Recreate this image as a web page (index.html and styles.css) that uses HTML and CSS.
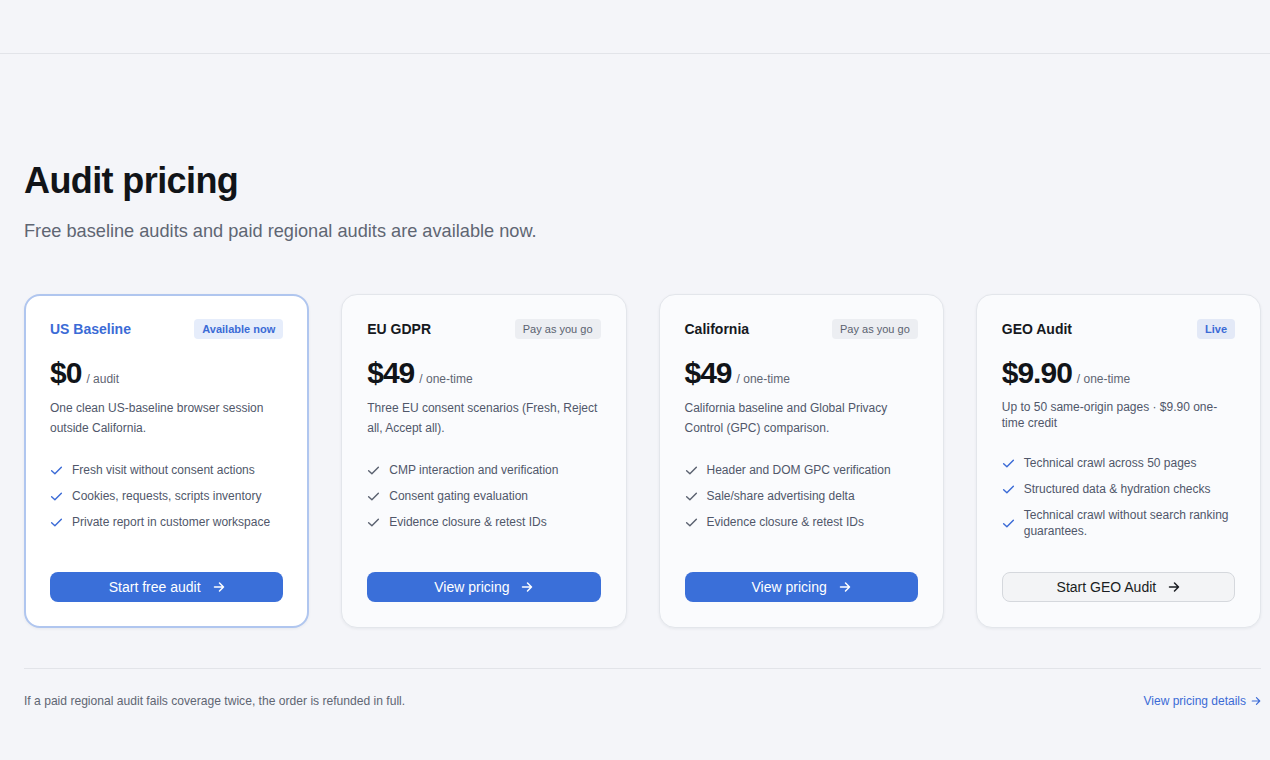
FILE: index.html
```html
<!DOCTYPE html>
<html lang="en">
<head>
<meta charset="utf-8">
<title>Audit pricing</title>
<link rel="stylesheet" href="styles.css">
</head>
<body>
<header class="topbar"></header>
<main class="main">
  <h1 class="title">Audit pricing</h1>
  <p class="subtitle">Free baseline audits and paid regional audits are available now.</p>

  <section class="plans">
    <article class="card card-featured">
      <div class="card-head">
        <h2 class="card-name card-name-blue">US Baseline</h2>
        <span class="badge badge-blue">Available now</span>
      </div>
      <div class="price"><span class="amount">$0</span><span class="unit">/ audit</span></div>
      <p class="desc">One clean US-baseline browser session outside California.</p>
      <ul class="features features-blue">
        <li><svg class="check" viewBox="0 0 12 12"><path d="M1.5 6.3l3 2.8 6-6.2"/></svg>Fresh visit without consent actions</li>
        <li><svg class="check" viewBox="0 0 12 12"><path d="M1.5 6.3l3 2.8 6-6.2"/></svg>Cookies, requests, scripts inventory</li>
        <li><svg class="check" viewBox="0 0 12 12"><path d="M1.5 6.3l3 2.8 6-6.2"/></svg>Private report in customer workspace</li>
      </ul>
      <a class="btn btn-primary" href="#">Start free audit<svg class="arrow" viewBox="0 0 12 12"><path d="M1.5 6h9M6.5 2l4 4-4 4"/></svg></a>
    </article>

    <article class="card">
      <div class="card-head">
        <h2 class="card-name">EU GDPR</h2>
        <span class="badge">Pay as you go</span>
      </div>
      <div class="price"><span class="amount">$49</span><span class="unit">/ one-time</span></div>
      <p class="desc">Three EU consent scenarios (Fresh, Reject all, Accept all).</p>
      <ul class="features">
        <li><svg class="check" viewBox="0 0 12 12"><path d="M1.5 6.3l3 2.8 6-6.2"/></svg>CMP interaction and verification</li>
        <li><svg class="check" viewBox="0 0 12 12"><path d="M1.5 6.3l3 2.8 6-6.2"/></svg>Consent gating evaluation</li>
        <li><svg class="check" viewBox="0 0 12 12"><path d="M1.5 6.3l3 2.8 6-6.2"/></svg>Evidence closure &amp; retest IDs</li>
      </ul>
      <a class="btn btn-primary" href="#">View pricing<svg class="arrow" viewBox="0 0 12 12"><path d="M1.5 6h9M6.5 2l4 4-4 4"/></svg></a>
    </article>

    <article class="card">
      <div class="card-head">
        <h2 class="card-name">California</h2>
        <span class="badge">Pay as you go</span>
      </div>
      <div class="price"><span class="amount">$49</span><span class="unit">/ one-time</span></div>
      <p class="desc">California baseline and Global Privacy Control (GPC) comparison.</p>
      <ul class="features">
        <li><svg class="check" viewBox="0 0 12 12"><path d="M1.5 6.3l3 2.8 6-6.2"/></svg>Header and DOM GPC verification</li>
        <li><svg class="check" viewBox="0 0 12 12"><path d="M1.5 6.3l3 2.8 6-6.2"/></svg>Sale/share advertising delta</li>
        <li><svg class="check" viewBox="0 0 12 12"><path d="M1.5 6.3l3 2.8 6-6.2"/></svg>Evidence closure &amp; retest IDs</li>
      </ul>
      <a class="btn btn-primary" href="#">View pricing<svg class="arrow" viewBox="0 0 12 12"><path d="M1.5 6h9M6.5 2l4 4-4 4"/></svg></a>
    </article>

    <article class="card">
      <div class="card-head">
        <h2 class="card-name">GEO Audit</h2>
        <span class="badge badge-live">Live</span>
      </div>
      <div class="price"><span class="amount">$9.90</span><span class="unit">/ one-time</span></div>
      <p class="desc desc-tight">Up to 50 same-origin pages · $9.90 one-time credit</p>
      <ul class="features features-blue features-tight">
        <li><svg class="check" viewBox="0 0 12 12"><path d="M1.5 6.3l3 2.8 6-6.2"/></svg>Technical crawl across 50 pages</li>
        <li><svg class="check" viewBox="0 0 12 12"><path d="M1.5 6.3l3 2.8 6-6.2"/></svg>Structured data &amp; hydration checks</li>
        <li><svg class="check" viewBox="0 0 12 12"><path d="M1.5 6.3l3 2.8 6-6.2"/></svg>Technical crawl without search ranking guarantees.</li>
      </ul>
      <a class="btn btn-outline" href="#">Start GEO Audit<svg class="arrow" viewBox="0 0 12 12"><path d="M1.5 6h9M6.5 2l4 4-4 4"/></svg></a>
    </article>
  </section>

  <footer class="note">
    <p class="note-text">If a paid regional audit fails coverage twice, the order is refunded in full.</p>
    <a class="note-link" href="#">View pricing details<svg class="arrow-sm" viewBox="0 0 12 12"><path d="M1.5 6h9M6.5 2l4 4-4 4"/></svg></a>
  </footer>
</main>
</body>
</html>
```

FILE: styles.css
```css
* { box-sizing: border-box; }

html, body {
  margin: 0;
  padding: 0;
  background: #f4f5f9;
  font-family: "Liberation Sans", Arial, sans-serif;
  color: #111418;
}

.topbar {
  height: 54px;
  border-bottom: 1px solid #e2e4e9;
}

.main {
  padding: 103px 9px 40px 24px;
}

.title {
  margin: 0;
  font-size: 36px;
  line-height: 48px;
  font-weight: 700;
  letter-spacing: -0.6px;
  color: #111418;
}

.subtitle {
  margin: 12px 0 0;
  font-size: 18.2px;
  line-height: 28px;
  color: #5f6673;
}

.plans {
  margin-top: 49px;
  display: grid;
  grid-template-columns: repeat(4, 1fr);
  gap: 32px;
}

.card {
  display: flex;
  flex-direction: column;
  background: #fafbfd;
  border: 1px solid #e3e6eb;
  border-radius: 16px;
  padding: 24px 25px 25px;
  box-shadow: 0 1px 3px rgba(20, 30, 50, 0.06);
}

.card-featured {
  background: #ffffff;
  border: 2px solid #b0c6ef;
  padding: 23px 24px 24px;
}

.card-head {
  display: flex;
  align-items: center;
  justify-content: space-between;
  height: 20px;
}

.card-name {
  margin: 0;
  font-size: 14px;
  line-height: 20px;
  font-weight: 700;
  color: #16191e;
}

.card-name-blue { color: #3b6bd6; }

.badge {
  display: inline-block;
  font-size: 11px;
  line-height: 20px;
  padding: 0 8px;
  border-radius: 4px;
  background: #eceef2;
  color: #5b6270;
}

.badge-blue {
  background: #e6edfb;
  color: #3b6bd6;
  font-weight: 700;
}

.badge-live {
  background: #e3e9f7;
  color: #3b6bd6;
  font-weight: 700;
}

.price {
  margin-top: 16px;
  height: 36px;
  line-height: 36px;
  font-size: 30px;
  white-space: nowrap;
}

.amount {
  font-size: 30px;
  font-weight: 700;
  letter-spacing: -1px;
  color: #111418;
}

.unit {
  margin-left: 5px;
  font-size: 12px;
  line-height: 1;
  color: #5f6673;
}

.desc {
  margin: 7px 0 0;
  font-size: 12px;
  line-height: 20px;
  color: #50576a;
}

.desc-tight {
  margin-top: 8px;
  line-height: 16px;
}

.features {
  list-style: none;
  margin: 22px 0 33px;
  padding: 0;
  display: flex;
  flex-direction: column;
  gap: 6px;
}

.features li {
  display: flex;
  align-items: center;
  gap: 9px;
  font-size: 12px;
  line-height: 20px;
  color: #50576a;
}

.features-tight {
  margin-top: 24px;
  gap: 10px;
}

.features-tight li { line-height: 16px; }

.check {
  flex: none;
  width: 13px;
  height: 13px;
  fill: none;
  stroke: #5b6270;
  stroke-width: 1.3;
  stroke-linecap: round;
  stroke-linejoin: round;
}

.features-blue .check { stroke: #3b6bd6; }

.btn {
  margin-top: auto;
  display: flex;
  align-items: center;
  justify-content: center;
  gap: 12px;
  height: 30px;
  border-radius: 8px;
  font-size: 14px;
  text-decoration: none;
}

.btn-primary {
  background: #3a6fd9;
  color: #ffffff;
}

.btn-outline {
  background: #f3f4f6;
  border: 1px solid #d5d8dd;
  color: #1a1d22;
}

.arrow {
  width: 12px;
  height: 12px;
  fill: none;
  stroke: currentColor;
  stroke-width: 1.5;
  stroke-linecap: round;
  stroke-linejoin: round;
}

.note {
  margin-top: 40px;
  border-top: 1px solid #e2e4e9;
  padding-top: 24px;
  display: flex;
  justify-content: space-between;
  align-items: center;
}

.note-text {
  margin: 0;
  font-size: 12.1px;
  line-height: 16px;
  color: #5f6673;
}

.note-link {
  display: flex;
  align-items: center;
  gap: 5px;
  font-size: 12px;
  line-height: 16px;
  color: #3b6bd6;
  text-decoration: none;
}

.arrow-sm {
  width: 10px;
  height: 10px;
  fill: none;
  stroke: currentColor;
  stroke-width: 1.4;
  stroke-linecap: round;
  stroke-linejoin: round;
}
```
